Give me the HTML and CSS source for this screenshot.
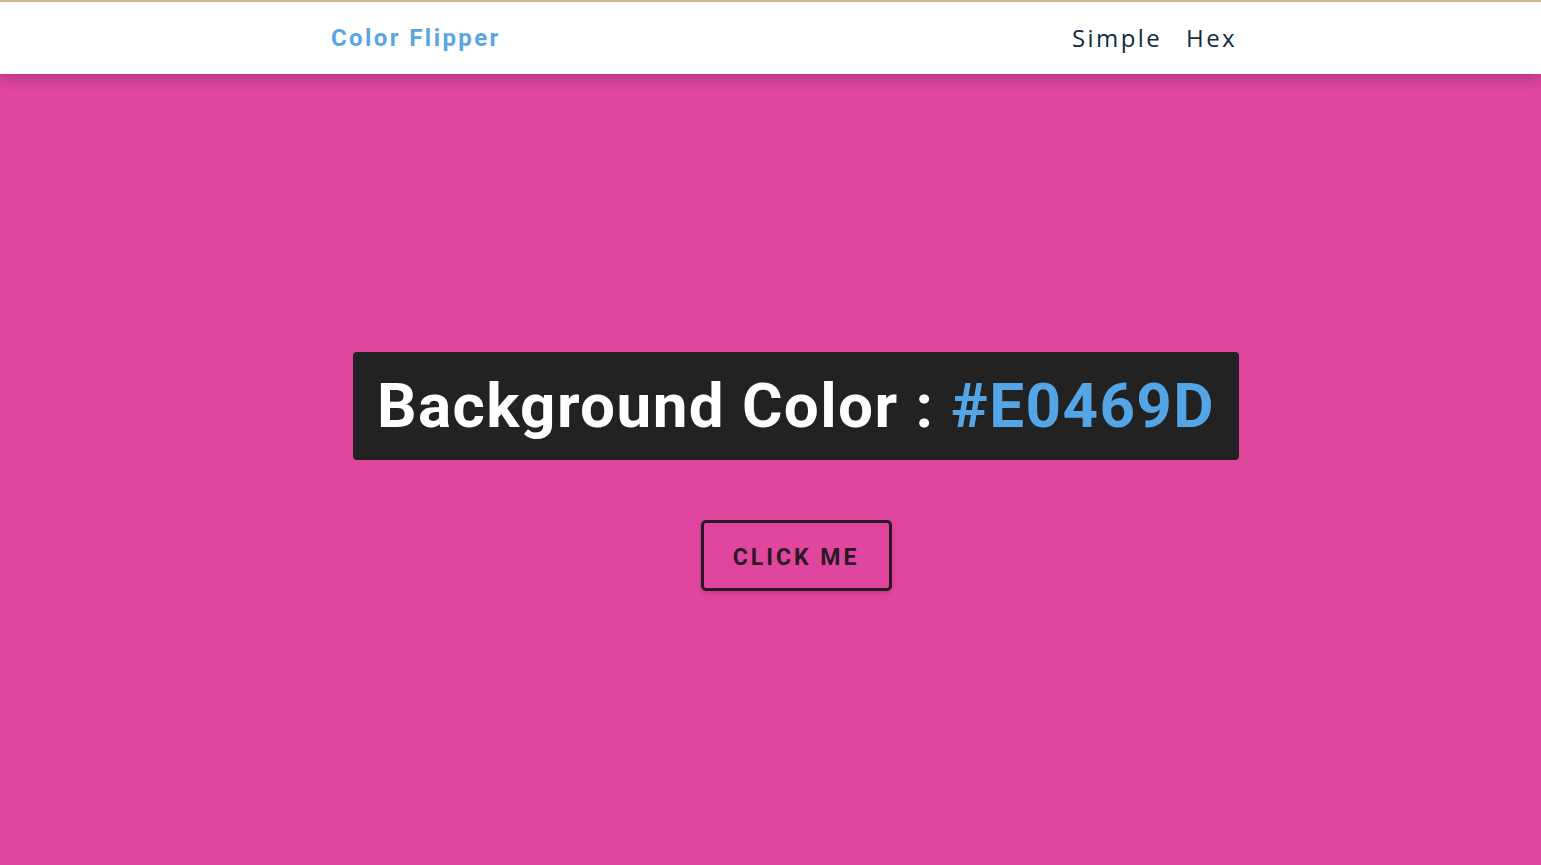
FILE: index.html
```html
<!DOCTYPE html>
<html lang="en">
<head>
<meta charset="utf-8">
<title>Color Flipper</title>
<link rel="stylesheet" href="styles.css">
</head>
<body>
<nav class="nav">
  <div class="nav-center">
    <h4 class="logo">Color Flipper</h4>
    <ul class="nav-links">
      <li><a href="#">Simple</a></li>
      <li><a href="#">Hex</a></li>
    </ul>
  </div>
</nav>
<main class="main">
  <div class="container">
    <h2 class="title">Background Color : <span class="color">#E0469D</span></h2>
    <button class="btn">Click Me</button>
  </div>
</main>
</body>
</html>
```
FILE: styles.css
```css
* { box-sizing: border-box; margin: 0; padding: 0; }
html, body { height: 100%; }
body {
  background: #E0469D;
  font-family: "Open Sans", "Liberation Sans", sans-serif;
  display: flex;
  flex-direction: column;
  overflow: hidden;
}
.nav {
  background: #fff;
  height: 74px;
  border-top: 2px solid #cdb592;
  box-shadow: 0 4px 14px rgba(0,0,0,0.22);
  position: relative;
  z-index: 1;
  flex: none;
}
.nav-center {
  height: 100%;
  display: flex;
  align-items: center;
  justify-content: space-between;
  padding: 0 304px 2px 331px;
}
.logo {
  font-family: Roboto, "Liberation Sans", sans-serif;
  font-weight: 700;
  font-size: 24px;
  letter-spacing: 2.4px;
  color: #5aa6e4;
  margin-top: 2px;
}
.nav-links {
  list-style: none;
  display: flex;
  gap: 24px;
}
.nav-links a {
  text-decoration: none;
  font-family: "Open Sans", sans-serif;
  font-weight: 500;
  font-size: 24px;
  letter-spacing: 2.4px;
  color: #102a42;
}
.main {
  flex: 1;
  display: flex;
  align-items: center;
  justify-content: center;
  padding-left: 51px;
}
.container {
  display: flex;
  flex-direction: column;
  align-items: center;
  margin-top: 4px;
}
.title {
  background: #222;
  color: #fff;
  font-family: Roboto, "Liberation Sans", sans-serif;
  font-weight: 700;
  font-size: 62px;
  letter-spacing: 1.4px;
  line-height: 80px;
  padding: 14px 24px;
  border-radius: 4px;
}
.color { color: #54a5e6; }
.btn {
  margin-top: 60px;
  width: 191px;
  height: 71px;
  padding-top: 3px;
  background: transparent;
  border: 3px solid #2a1727;
  border-radius: 5px;
  color: #2a1727;
  font-family: Roboto, "Liberation Sans", sans-serif;
  font-weight: 700;
  font-size: 23px;
  letter-spacing: 3px;
  text-transform: uppercase;
  box-shadow: 0 2px 4px rgba(0,0,0,0.15);
  cursor: pointer;
}
```
